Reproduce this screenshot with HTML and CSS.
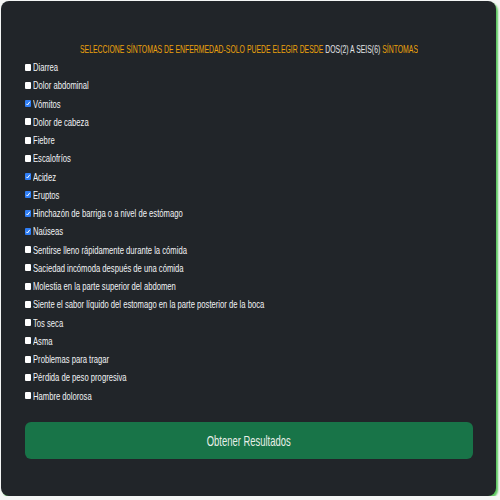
FILE: index.html
```html
<!DOCTYPE html>
<html lang="es">
<head>
<meta charset="utf-8">
<title>Síntomas</title>
<link rel="stylesheet" href="styles.css">
</head>
<body>
<form class="card">
  <p class="title"><span class="squeeze">SELECCIONE SÍNTOMAS DE ENFERMEDAD-SOLO PUEDE ELEGIR DESDE <span class="light">DOS(2) A SEIS(6)</span> SÍNTOMAS</span></p>
  <div class="list">
    <label class="item"><input type="checkbox"><span class="squeeze">Diarrea</span></label>
    <label class="item"><input type="checkbox"><span class="squeeze">Dolor abdominal</span></label>
    <label class="item"><input type="checkbox" checked><span class="squeeze">Vómitos</span></label>
    <label class="item"><input type="checkbox"><span class="squeeze">Dolor de cabeza</span></label>
    <label class="item"><input type="checkbox"><span class="squeeze">Fiebre</span></label>
    <label class="item"><input type="checkbox"><span class="squeeze">Escalofríos</span></label>
    <label class="item"><input type="checkbox" checked><span class="squeeze">Acidez</span></label>
    <label class="item"><input type="checkbox" checked><span class="squeeze">Eruptos</span></label>
    <label class="item"><input type="checkbox" checked><span class="squeeze">Hinchazón de barriga o a nivel de estómago</span></label>
    <label class="item"><input type="checkbox" checked><span class="squeeze">Naúseas</span></label>
    <label class="item"><input type="checkbox"><span class="squeeze">Sentirse lleno rápidamente durante la cómida</span></label>
    <label class="item"><input type="checkbox"><span class="squeeze">Saciedad incómoda después de una cómida</span></label>
    <label class="item"><input type="checkbox"><span class="squeeze">Molestia en la parte superior del abdomen</span></label>
    <label class="item"><input type="checkbox"><span class="squeeze">Siente el sabor líquido del estomago en la parte posterior de la boca</span></label>
    <label class="item"><input type="checkbox"><span class="squeeze">Tos seca</span></label>
    <label class="item"><input type="checkbox"><span class="squeeze">Asma</span></label>
    <label class="item"><input type="checkbox"><span class="squeeze">Problemas para tragar</span></label>
    <label class="item"><input type="checkbox"><span class="squeeze">Pérdida de peso progresiva</span></label>
    <label class="item"><input type="checkbox"><span class="squeeze">Hambre dolorosa</span></label>
  </div>
  <button type="button" class="submit"><span class="squeeze">Obtener Resultados</span></button>
</form>
</body>
</html>
```

FILE: styles.css
```css
html, body {
  margin: 0;
  padding: 0;
  background: #f4f6f5;
}

body {
  font-family: "Liberation Sans", Arial, sans-serif;
  font-size: 11.5px;
  color: #f1f3f5;
}

.card {
  box-sizing: border-box;
  width: 495px;
  height: 495px;
  margin: 1px 0 0 1px;
  padding: 39px 23px 0 24px;
  background: #212529;
  border-radius: 8px;
  box-shadow: 2px 2px 2px #5cc85f;
  display: flex;
  flex-direction: column;
}

.squeeze {
  display: inline-block;
  white-space: nowrap;
  transform: scaleX(0.665);
  transform-origin: left center;
}

.title {
  margin: 0;
  height: 18px;
  line-height: 18px;
  display: flex;
  justify-content: center;
  overflow: hidden;
  color: #eba20c;
  font-size: 10.5px;
}

.title .squeeze {
  flex: none;
  transform: scaleX(0.655);
  transform-origin: center center;
}

.title .light {
  color: #e4e6e8;
}

.list {
  display: flex;
  flex-direction: column;
}

.item {
  display: flex;
  align-items: center;
  gap: 2px;
  height: 18.25px;
  line-height: 18px;
}

.item input {
  appearance: none;
  -webkit-appearance: none;
  margin: 0;
  width: 6px;
  height: 7px;
  border-radius: 1px;
  background: #ffffff;
  flex: none;
}

.item input:checked {
  background: #2f7ef5 url("data:image/svg+xml,%3Csvg xmlns='http://www.w3.org/2000/svg' viewBox='0 0 6 7'%3E%3Cpath d='M1.3 3.8 L2.5 5 L4.8 1.8' fill='none' stroke='white' stroke-width='1'/%3E%3C/svg%3E") no-repeat center / 6px 7px;
}

.submit {
  margin-top: 17px;
  height: 37px;
  border: 0;
  border-radius: 6px;
  background: #187448;
  color: #e8efe9;
  font-family: "Liberation Sans", Arial, sans-serif;
  font-size: 15px;
  display: flex;
  justify-content: center;
  align-items: center;
  overflow: hidden;
  cursor: pointer;
}

.submit .squeeze {
  flex: none;
  transform: scaleX(0.63);
  transform-origin: center center;
}
```
